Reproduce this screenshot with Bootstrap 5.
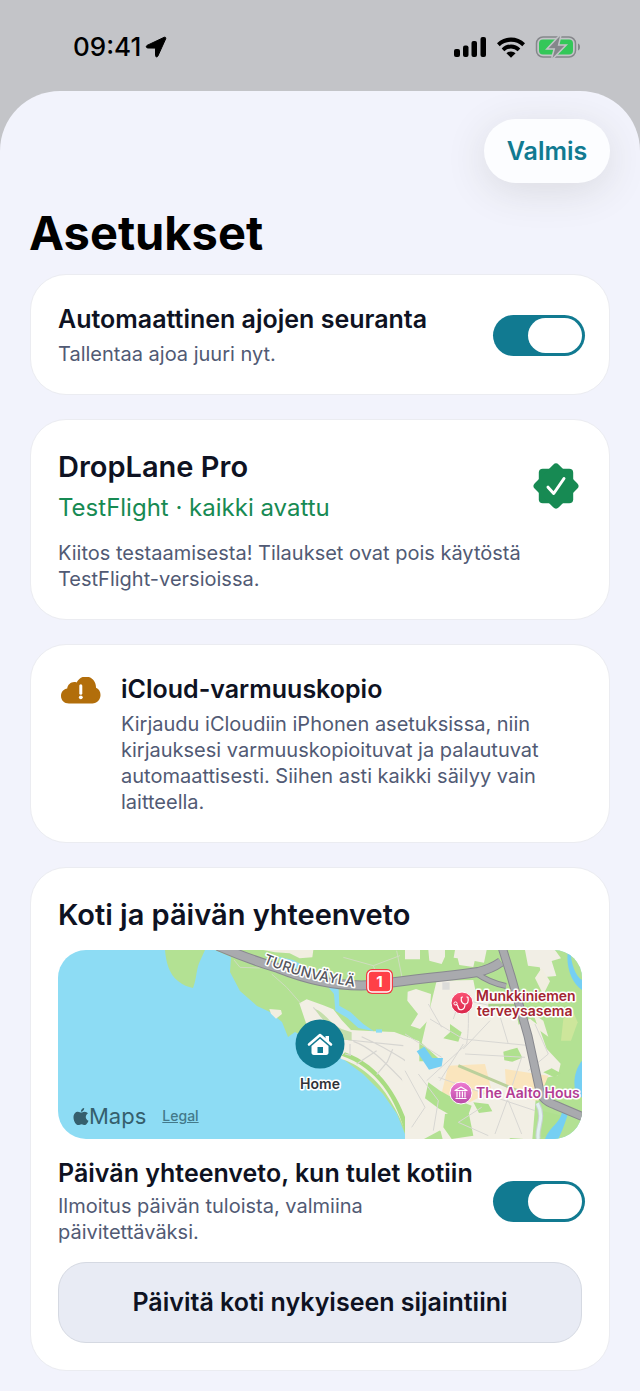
<!DOCTYPE html>
<html lang="fi">
<head>
<meta charset="utf-8">
<meta name="viewport" content="width=device-width, initial-scale=1">
<title>Asetukset</title>
<link href="https://cdn.jsdelivr.net/npm/bootstrap@5.3.0/dist/css/bootstrap.min.css" rel="stylesheet">
<style>
  :root { --teal: #117a91; --ink: #0e1222; --muted-ink: #515a74; --ok: #178a53; }
  body { font-family: Inter, "Liberation Sans", sans-serif; background: #c3c4c8; color: var(--ink); }
  svg { display: block; flex: none; }
  .status { height: 91px; padding: 3px 58px 0 73px; color: #000; }
  .clock { font-size: 26px; font-weight: 500; line-height: 32px; }
  .sheet { background: #f2f3fc; border-radius: 60px 60px 0 0; padding: 28px 30px 20px; overflow: hidden; }
  .done { height: 64px; width: 126px; padding: 2px 0 0; border: 0; border-radius: 32px; background: #fcfdff; color: var(--teal); font-size: 25px; font-weight: 600; box-shadow: 0 8px 40px rgba(60, 60, 40, .13); }
  .done:hover { background: #fff; color: var(--teal); }
  .page-title { font-size: 47px; font-weight: 700; line-height: 56px; margin: 22px 0 13px -1px; color: #000; }
  .stack { display: grid; gap: 24px; }
  .panel { background: #fff; border: 1px solid #ebecf1; border-radius: 36px; padding: 28px 27px 27px; }
  .item-title { font-size: 25px; font-weight: 600; line-height: 32px; margin: 0; }
  .panel-title { font-size: 29px; font-weight: 600; line-height: 38px; margin: 0; }
  .note { font-size: 20px; line-height: 26px; color: var(--muted-ink); margin: 0; }
  .plan { font-size: 24px; line-height: 32px; color: var(--ok); margin: 0; }
  .item-title + .note, .panel-title + .plan { margin-top: 6px; }
  .form-check-input.toggle { flex: none; appearance: none; width: 92px; height: 41px; margin: 0 -3px 0 0; border: 0; border-radius: 21px; background: #c9ccd6; position: relative; }
  .form-check-input.toggle:checked { background: var(--teal); }
  .toggle::before { content: ""; position: absolute; inset: 3px 35px 3px 3px; border-radius: 18px; background: #fff; }
  .toggle:checked::before { inset: 3px 3px 3px 35px; }
  .map { position: relative; margin: 16px 0 18px; border-radius: 28px; overflow: hidden; background: #8ddcf4; }
  .map > svg { width: 100%; height: auto; }
  .map-credit { position: absolute; left: 15px; bottom: 9px; color: #355f6d; }
  .map-brand { font-size: 22px; line-height: 28px; }
  .map-legal { font-size: 14px; line-height: 18px; color: #43798a; font-weight: 500; }
  .map-label { font-family: Inter, sans-serif; font-weight: 600; font-size: 14px; paint-order: stroke; stroke: #fff; stroke-width: 3px; stroke-linejoin: round; }
  .summary { margin-bottom: 17px; }
  .summary .item-title + .note { margin-top: 4px; }
  .update { min-height: 81px; border: 1px solid #d5d9e2; border-radius: 28px; background: #e8ebf4; color: var(--ink); font-size: 25px; font-weight: 600; }
</style>
</head>
<body class="d-flex flex-column min-vh-100">
<header class="status d-flex align-items-center justify-content-between">
  <div class="d-flex align-items-center gap-1">
    <span class="clock">09:41</span>
    <svg width="22" height="22" viewBox="0 0 22 22" aria-hidden="true"><path d="M2 9.400 19.200 1.300c1.100-.5 2 .4 1.500 1.500L12.900 20c-.6 1.300-2.400 1.200-2.400-.5v-7.400l-7.600-.1C1.100 12 .8 10 2 9.400z" stroke="#000"/></svg>
  </div>
  <div class="d-flex align-items-center" aria-hidden="true">
    <svg width="33" height="22" viewBox="0 0 33 22"><rect x="0" y="13" width="6" height="8" rx="2"/><rect x="9" y="9.500" width="5.500" height="11.500" rx="2"/><rect x="17.500" y="5" width="5.500" height="16" rx="2"/><rect x="26.500" y="1" width="5.500" height="20" rx="2"/></svg>
    <svg class="mx-2" width="32" height="22" viewBox="0 0 32 22"><path d="M2 7.200a20 20 0 0 1 28 0l-2.700 3a16.500 16.500 0 0 0-22.600 0zM6.700 12.400a13.200 13.200 0 0 1 18.600 0l-2.600 2.900a9.600 9.600 0 0 0-13.400 0zM11.400 17.300a6.600 6.600 0 0 1 9.200 0L16 21.800z"/></svg>
    <svg width="47" height="24" viewBox="0 0 47 24"><rect x="1.500" y="2" width="39" height="20" rx="6.500" fill="none" stroke="#85878b" stroke-width="1.500"/><path d="M43 8.500v7c2.700-.8 2.700-6.200 0-7z" fill="#85878b"/><rect x="4" y="4.500" width="34" height="15" rx="4" fill="#34c759"/><path d="M25 1 13.500 13.200h6.700L17.500 23l12-12.300H22.700z" fill="#85878b" stroke="#c3c4c8" stroke-width="3" paint-order="stroke"/></svg>
  </div>
</header>

<main class="sheet flex-grow-1">
  <div class="d-flex justify-content-end"><button type="button" class="btn done">Valmis</button></div>
  <h1 class="page-title">Asetukset</h1>

  <div class="stack">
    <section class="panel d-flex align-items-center justify-content-between">
      <div>
        <label class="item-title" for="autoTrack">Automaattinen ajojen seuranta</label>
        <p class="note">Tallentaa ajoa juuri nyt.</p>
      </div>
      <input class="form-check-input toggle" type="checkbox" role="switch" id="autoTrack" checked>
    </section>

    <section class="panel">
      <div class="d-flex align-items-center justify-content-between">
        <div>
          <h2 class="panel-title">DropLane Pro</h2>
          <p class="plan">TestFlight · kaikki avattu</p>
        </div>
        <svg width="50" height="46" viewBox="0 0 50 46" aria-hidden="true"><g fill="#178a53"><rect x="6.800" y="5.800" width="34.400" height="34.400" rx="4"/><rect x="7" y="6" width="34" height="34" rx="4" transform="rotate(45 24 23)"/></g><path d="m16 24.200 5.700 6.300L32 15.500" fill="none" stroke="#fff" stroke-width="3" stroke-linecap="round" stroke-linejoin="round"/></svg>
      </div>
      <p class="note mt-3">Kiitos testaamisesta! Tilaukset ovat pois käytöstä TestFlight-versioissa.</p>
    </section>

    <section class="panel d-flex align-items-start">
      <svg class="mt-1 me-3" width="47" height="30" viewBox="0 0 47 30" aria-hidden="true"><path d="M11 26.500C6 26.500 3 23 3 19c0-4.300 3-7 6.200-7.500C9.500 7 14.500 3.700 18.600 5.500 21 1.500 24-.5 27.500-.5c6 0 10.700 4.800 10.500 11.200 3.200 1.300 4.500 4.300 4.500 7.400 0 4.800-3.500 8.400-8.200 8.400z" fill="#b26e0b" stroke="none"/><path d="M22.800 8.800v7.400" stroke="#fff" stroke-width="3" stroke-linecap="round"/><circle cx="22.800" cy="20.300" r="1.900" fill="#fff"/></svg>
      <div>
        <h2 class="item-title">iCloud-varmuuskopio</h2>
        <p class="note">Kirjaudu iCloudiin iPhonen asetuksissa, niin kirjauksesi varmuuskopioituvat ja palautuvat automaattisesti. Siihen asti kaikki säilyy vain laitteella.</p>
      </div>
    </section>

    <section class="panel">
      <h2 class="panel-title">Koti ja päivän yhteenveto</h2>
      <div class="map">
        <svg viewBox="0 0 524 189" role="img" aria-label="Kartta kodin sijainnista">
          <defs>
            <linearGradient id="red" x2="0" y2="1"><stop stop-color="#fb5273"/><stop offset="1" stop-color="#d9264a"/></linearGradient>
            <linearGradient id="pink" x2="0" y2="1"><stop stop-color="#ef7bd2"/><stop offset="1" stop-color="#b94aa8"/></linearGradient>
            <path id="turu" d="M205 13Q245 30 306 38"/>
          </defs>
          <path d="M107 0c1 12 4 24 13 31 5 4 10 6 15 7 4-10 3-19 7-27l5-11z" fill="#b3e193"/>
          <path d="M157 0 173 7 172 22 182 41 199 56 212 62 224 72 230 87 237 82 285 109 305 124 325 144 339 164 349 189H524V0z" fill="#b3e193"/>
          <g transform="translate(172 -6) scale(.3333)">
            <path d="M100 18h150l-3 22-38 3-30-15-44-3zM118 195l35 3 3 12-18 14-15-15z" fill="#f1eee0"/>
            <path d="M208 178l22-12 50 18 30 12 25 32 28 30 70 4 60 2 75 28v290l-34-2c-30-80-70-150-120-190-30-25-55-37-80-45l-60-75-40-15z" fill="#f2efe5"/>
            <path d="M335 335C440 372 500 460 532 590L548 590C515 465 455 365 345 325z" fill="#a9dc82"/>
            <path d="M355 288 520 305M360 300v34M345 330l18 4M395 278c55 25 90 45 125 68l50 40M370 292c60 20 105 75 175 145M440 392l32-38 16-38M440 320l-60 40M250 190l80 90" stroke="#d6d5d1" stroke-width="3.500" fill="none"/>
            <path d="M255 195c30 10 40 40 80 60l30 10v24l-30-2-65-70z" fill="#c5dfab"/>
            <path d="M135 36 180 62 230 90 285 118 312 150 316 200 352 222 385 252 432 262 400 240 362 205 328 185 326 135 290 100 250 82 190 48z" fill="#8ddcf4"/>
            <path d="M12 48 30 70 90 72M125 90l45 40 42 48M340 40l90 25 80-30M500 20l20 100M430 65l15 40" stroke="#cfdcc0" stroke-width="3" fill="none"/>
            <path d="M438 256h18v10h-18z" fill="#8ddcf4"/>
          </g>
          <g transform="translate(347 -6) scale(.3333)">
            <path d="M0 18h45v28H0zM70 18h50v20l-10 22-37-10zM150 18h95l-8 38-28-5-4 18-42-6-5-20-12-2z" fill="#f1eee5"/>
            <path d="M360 18h90l18 25-28 8 14 45-42 4-8-30-35-5z" fill="#f1eee5"/>
            <path d="M95 110l110-2 8 40 82 4 32 22 14 68 34-18 25 20 25 70 42 45-8 35-50 10-15 38-12 145-65-5-30 20-170 0-10-40-110-120-10-60-30-18v-20l28 18 60-10 65 0-60-55 12-52z" fill="#f2efe5"/>
            <path d="M8 143 33 135l45 15-5 75-28 30-28-10 22-35-32-40zM0 330l50 40 45 50-30 30-5 55 45-12 12 60-60 32H0z" fill="#f2efe5"/>
            <path d="M390 102l20-30 25 40-20 40zM385 210l30 20 15 48-28-20z" fill="#f1eee0"/>
            <path d="M475 225l28-25 15 35-20 55h-30z" fill="#cde69b"/>
            <path d="M130 365l110-5 20 80-65 35-85-28zM300 375l130 20-30 75-95-12z" fill="#fae5bd"/>
            <path d="M295 323l42-12 15 30-30 12-24-4zM70 415l35 25 45 25 50 20-10 28-45 5-45-25-40-30zM205 475l45 5 12 22-40 5zM120 510l70-10 15 75-65 10-25-35zM135 240l35 25-10 28-45-10 20-18zM415 385l25-12 28 15-20 12zM410 500l60 15-30 60-30 5z" fill="#afe08e"/>
            <path d="M112 115h22v22h-22z" fill="#dcdcda"/>
            <path d="M165 165l115 25 65-10M165 165l-20 60M190 165c0 60 2 90-5 135l-120 110M75 225l100 60 200 20M175 300l-70 110M180 330l180 10M255 230l-80 85M40 390l60 80-15 90M350 340l-40 120-40 110M100 400l200 70 90 30M0 270l110 70M70 180l40 70M280 200l30 100M390 240l40 90-60 50M230 490l-70 45 90 40M310 470l40 100M0 380l60 110-40 60" stroke="#d8d7d3" stroke-width="3" fill="none"/>
            <path d="M160 365 385 460" stroke="#bbd09c" stroke-width="9" fill="none"/>
            <path d="M250 184h100" stroke="#abd18a" stroke-width="9"/>
            <path d="M35 322 58 308l24 34 32 0-4 25-38 10zM497 18c0 40 15 80 34 90v30c-30-20-50-70-42-120zM531 350c-25 30-30 80-12 110h12zM420 585c15-40 45-45 52-85l18 5c-8 30-20 60-30 80z" fill="#75cff3"/>
            <path d="M397 478c25 45-5 75 3 107" stroke="#c9d1d2" stroke-width="15" fill="none"/>
            <path d="M397 478c25 45-5 75 3 107" stroke="#e0f0f0" stroke-width="9" fill="none"/>
          </g>
          <g fill="none" stroke-linejoin="round">
            <g stroke="#88898f">
              <path d="M160-4Q190 9 220 18Q270 38 315 35Q345 31 370 28Q400 25 420 22Q433 19 443 12" stroke-width="10"/>
              <path d="M418 23Q432 33 448 36" stroke-width="6"/>
              <path d="M444-3 453 26 470 86 481 137Q482 150 497 155L530 169" stroke-width="9"/>
            </g>
            <g stroke="#a9aaae">
              <path d="M160-4Q190 9 220 18Q270 38 315 35Q345 31 370 28Q400 25 420 22Q433 19 443 12" stroke-width="8"/>
              <path d="M418 23Q432 33 448 36" stroke-width="4"/>
              <path d="M444-3 453 26 470 86 481 137Q482 150 497 155L530 169" stroke-width="7"/>
            </g>
          </g>
          <text class="map-label" fill="#55565e" style="font-weight:500"><textPath href="#turu">TURUNVÄYLÄ</textPath></text>
          <rect x="308" y="19" width="27" height="25" rx="6" fill="#f23b43"/><rect x="310" y="21" width="23" height="21" rx="4" fill="#ff4047" stroke="#fff" stroke-width="1.500"/>
          <text x="321.500" y="37" text-anchor="middle" font-size="15" font-weight="700" fill="#fff">1</text>
          <circle cx="262" cy="94" r="24.500" fill="#117a91"/>
          <g transform="translate(249.500 81.500)"><path d="M1.500 13 12.500 3.500 23.500 13" fill="none" stroke="#fff" stroke-width="2.600" stroke-linecap="round" stroke-linejoin="round"/><path d="M18 4.500h3.500v6L18 7.500z" fill="#fff"/><path d="M12.500 7.200 21 14.500V21c0 1.600-.8 2.500-2.300 2.500H6.300C4.800 23.500 4 22.600 4 21v-6.500z" fill="#fff"/><rect x="10" y="15.500" width="5.500" height="6" fill="#117a91"/></g>
          <text class="map-label" x="262" y="139" text-anchor="middle" fill="#303238">Home</text>
          <circle cx="404" cy="53" r="11" fill="url(#red)" stroke="#fff" stroke-width="1"/>
          <path d="M404.500 47l-1.200.5c-.8 5 2 6.500 3.700 6.500 2.300 0 4-2 3-6.500l-1-.5M407 54c0 7-6 7-7 3-.2-2-1-2.500-2-2.500" fill="none" stroke="#fff" stroke-width="1.200" stroke-linecap="round"/><circle cx="397.500" cy="53.500" r="1.600" fill="none" stroke="#fff"/>
          <g fill="#a32531"><text class="map-label" x="418" y="51">Munkkiniemen</text><text class="map-label" x="419" y="66">terveysasema</text></g>
          <circle cx="403" cy="143" r="11" fill="url(#pink)" stroke="#fff" stroke-width="1"/>
          <path d="M397 140.500 403 137l6 3.500zM397.500 148.500h11M399 141.500v6m2.700-6v6m2.700-6v6m2.600-6v6" fill="none" stroke="#fff" stroke-width="1.200" stroke-linejoin="round"/>
          <text class="map-label" x="418" y="148" fill="#b33d94">The Aalto Hous</text>
        </svg>
        <div class="map-credit d-flex align-items-center">
          <svg width="16" height="19" viewBox="0 0 16 19" fill="#355f6d" aria-hidden="true"><path d="M11.200 1c.1 2-1.500 3.800-3.300 3.700C7.700 2.900 9.400 1.100 11.200 1zM8.200 5.600c.8 0 1.900-.9 3.300-.9 1.500 0 2.700.7 3.400 1.800-3.200 2-2.500 6 .6 7.200-.7 1.900-2.200 4.300-3.700 4.300-1.300 0-1.700-.8-3.200-.8s-2 .8-3.200.8C3 18 .5 14 .5 10.400c0-3.600 2.200-5.600 4.500-5.600 1.300 0 2.400.8 3.200.8z"/></svg>
          <span class="map-brand">Maps</span>
          <a class="map-legal ms-3" href="#legal">Legal</a>
        </div>
      </div>
      <div class="summary d-flex align-items-center justify-content-between">
        <div>
          <label class="item-title" for="summary">Päivän yhteenveto, kun tulet kotiin</label>
          <p class="note">Ilmoitus päivän tuloista, valmiina päivitettäväksi.</p>
        </div>
        <input class="form-check-input toggle" type="checkbox" role="switch" id="summary" checked>
      </div>
      <button type="button" class="btn update w-100">Päivitä koti nykyiseen sijaintiini</button>
    </section>
  </div>
</main>
<script src="https://cdn.jsdelivr.net/npm/bootstrap@5.3.0/dist/js/bootstrap.bundle.min.js"></script>
</body>
</html>
